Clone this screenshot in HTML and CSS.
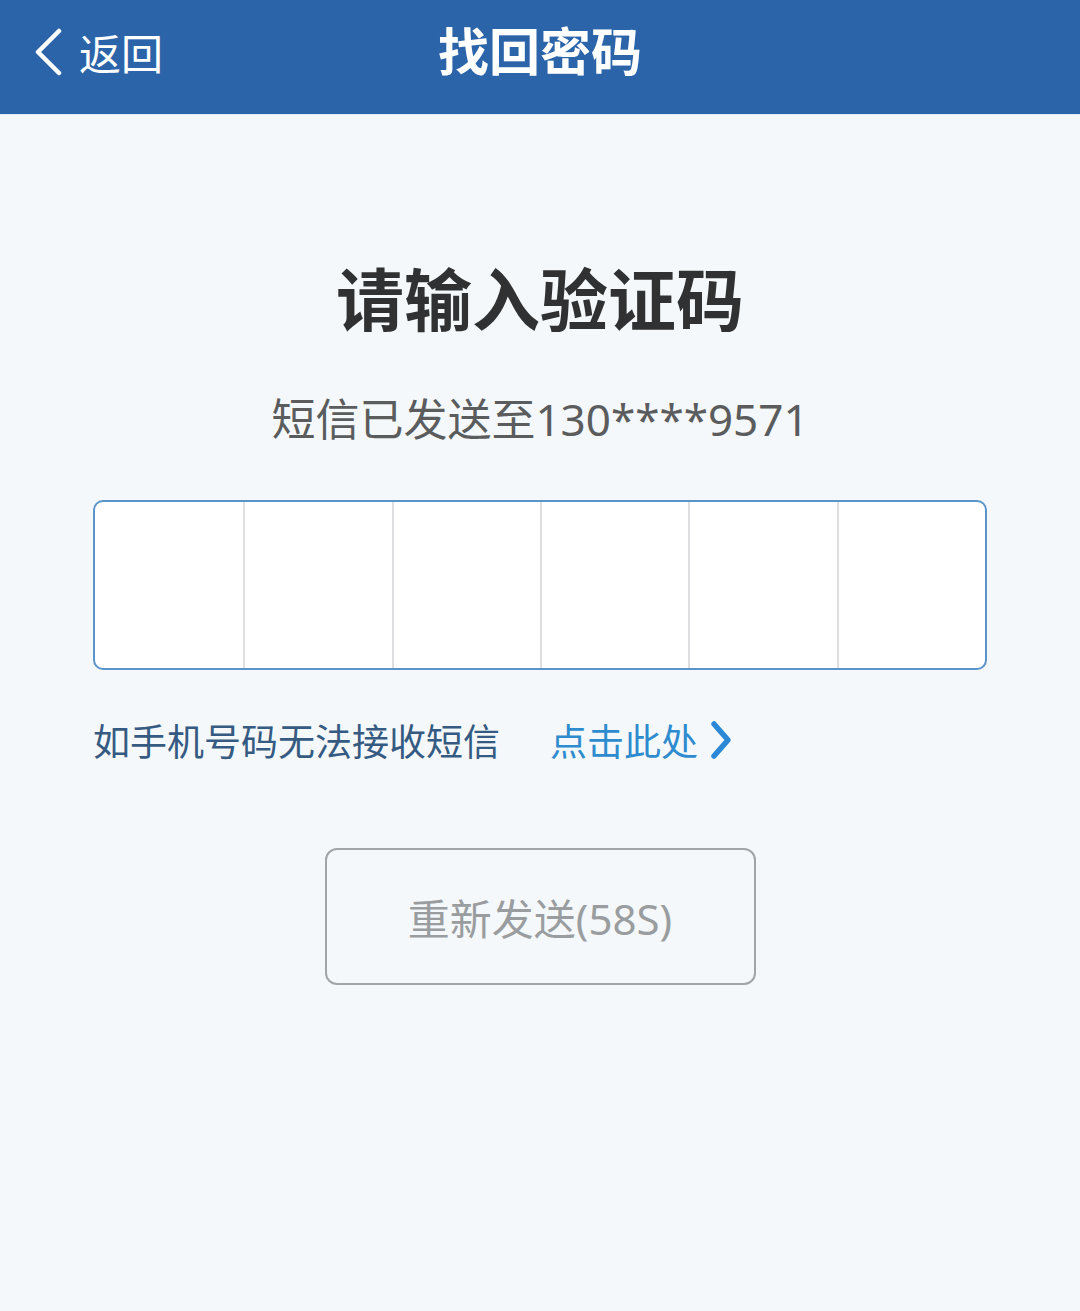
FILE: index.html
```html
<!DOCTYPE html>
<html lang="zh-CN">
<head>
<meta charset="utf-8">
<title>找回密码</title>
<link rel="stylesheet" href="styles.css">
</head>
<body>
<header class="topbar">
  <a class="back">
    <svg class="back-icon" width="30" height="48" viewBox="0 0 30 48"><path d="M26 3 L5 24 L26 45" fill="none" stroke="#ffffff" stroke-width="4.5" stroke-linecap="round" stroke-linejoin="round"/></svg>
    <span class="back-text">返回</span>
  </a>
  <h1 class="title">找回密码</h1>
</header>
<main class="content">
  <h2 class="heading">请输入验证码</h2>
  <p class="sub">短信已发送至130****9571</p>
  <div class="code-box">
    <div class="cell"></div>
    <div class="cell"></div>
    <div class="cell"></div>
    <div class="cell"></div>
    <div class="cell"></div>
    <div class="cell"></div>
  </div>
  <div class="help">
    <span class="help-text">如手机号码无法接收短信</span>
    <a class="help-link">点击此处
      <svg class="help-icon" width="26" height="40" viewBox="0 0 26 40"><path d="M6 4 L20 20 L6 36" fill="none" stroke="#2a88d6" stroke-width="5.5" stroke-linecap="round" stroke-linejoin="round"/></svg>
    </a>
  </div>
  <button class="resend" type="button">重新发送(58S)</button>
</main>
</body>
</html>
```

FILE: styles.css
```css
* { box-sizing: border-box; }
html, body {
  margin: 0;
  padding: 0;
}
body {
  width: 1080px;
  min-height: 1311px;
  background: #f4f8fa;
  font-family: "Noto Sans", "Noto Sans CJK SC", sans-serif;
}
.topbar {
  position: relative;
  height: 115px;
  background: #2c64aa;
  display: flex;
  align-items: center;
  justify-content: center;
  border-bottom: 1px solid #dfeaf2;
}
.back {
  position: absolute;
  left: 33px;
  top: 28px;
  display: flex;
  align-items: center;
  gap: 16px;
  color: #fff;
}
.back-icon { display: block; }
.back-text {
  font-size: 42px;
  line-height: 48px;
  font-family: "Noto Sans CJK SC", sans-serif;
}
.title {
  margin: 0;
  color: #fff;
  font-size: 51px;
  font-weight: 700;
  line-height: 1;
  font-family: "Noto Sans CJK SC", sans-serif;
  transform: translateY(-8px);
}
.content {
  display: flex;
  flex-direction: column;
  align-items: center;
  padding-top: 148px;
}
.heading {
  margin: 0;
  font-size: 68px;
  font-weight: 700;
  line-height: 1;
  color: #2f3132;
  font-family: "Noto Sans CJK SC", sans-serif;
}
.sub {
  margin: 66px 0 0;
  font-size: 44px;
  line-height: 1;
  color: #5a5c5d;
  font-family: "Noto Sans", "Noto Sans CJK SC", sans-serif;
}
.code-box {
  margin-top: 59px;
  width: 894px;
  height: 170px;
  border: 2.5px solid #5b94c9;
  border-radius: 10px;
  background: #fff;
  display: grid;
  grid-template-columns: repeat(6, 1fr);
  overflow: hidden;
}
.cell {
  border-left: 2px solid #dcdee0;
}
.cell:first-child { border-left: none; }
.help {
  margin-top: 50px;
  width: 894px;
  display: flex;
  align-items: center;
  font-size: 37px;
  line-height: 40px;
  font-family: "Noto Sans CJK SC", sans-serif;
}
.help-text {
  color: #365b82;
}
.help-link {
  margin-left: 50px;
  color: #2e8bce;
  display: flex;
  align-items: center;
  gap: 10px;
}
.help-icon { display: block; }
.resend {
  margin-top: 88px;
  width: 431px;
  height: 137px;
  border: 2.5px solid #a2a5a7;
  border-radius: 12px;
  background: transparent;
  color: #9a9d9f;
  font-size: 42px;
  font-family: "Noto Sans", "Noto Sans CJK SC", sans-serif;
  padding: 0;
}
```
